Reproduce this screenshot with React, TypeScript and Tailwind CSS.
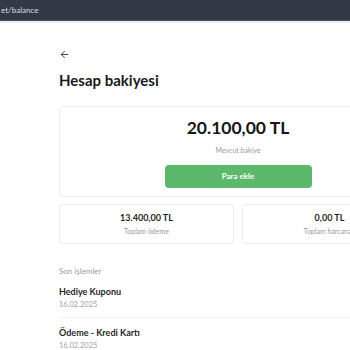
import { ArrowLeft } from "lucide-react";

const font = { fontFamily: "Lato, 'Noto Sans', sans-serif" };

function StatCard({ amount, label }: { amount: string; label: string }) {
  return (
    <div className="flex h-[40px] flex-1 flex-col items-center justify-center rounded-[4px] border border-[#ececec] bg-white">
      <div className="text-[9px] font-bold leading-none text-[#1f1f1f]">{amount}</div>
      <div className="mt-[6px] text-[7px] leading-none text-[#9a9a9a]">{label}</div>
    </div>
  );
}

function TxRow({ title, date }: { title: string; date: string }) {
  return (
    <div className="flex flex-col">
      <div className="text-[9px] font-bold leading-none text-[#1f1f1f]">{title}</div>
      <div className="mt-[5px] text-[7.5px] leading-none text-[#a0a0a0]">{date}</div>
    </div>
  );
}

export default function App() {
  return (
    <div className="h-[350px] w-[350px] overflow-hidden bg-white" style={font}>
      <div className="flex h-[21px] items-center border-b border-[#4a5060] bg-[#333a46]">
        <span className="ml-px text-[8px] leading-none text-[#d9dce2]">et/balance</span>
      </div>
      <div className="h-[2px] bg-[#e9eef5]" />

      <div className="flex flex-col pl-[59px] pt-[26px]" style={{ width: 417 }}>
        <ArrowLeft className="h-[11px] w-[11px] text-[#333]" strokeWidth={2} />
        <h1 className="mt-[13px] text-[15px] font-bold leading-none text-[#1a1a1a]">
          Hesap bakiyesi
        </h1>

        <div className="mt-[18px] flex h-[91px] flex-col items-center rounded-[4px] border border-[#ececec] bg-white pt-[12px]">
          <div className="text-[17.5px] font-bold leading-none text-[#161616]">20.100,00 TL</div>
          <div className="mt-[10px] text-[7px] leading-none text-[#9a9a9a]">Mevcut bakiye</div>
          <button
            type="button"
            className="mt-[11px] flex h-[23px] w-[147px] items-center justify-center rounded-[4px] bg-[#5cb96c] text-[8px] font-bold text-white"
          >
            Para ekle
          </button>
        </div>

        <div className="mt-[7px] flex gap-[8px]">
          <StatCard amount="13.400,00 TL" label="Toplam ödeme" />
          <StatCard amount="0,00 TL" label="Toplam harcanan" />
        </div>

        <div className="mt-[23px] text-[8px] leading-none text-[#9a9a9a]">Son işlemler</div>
        <div className="mt-[12px] flex flex-col">
          <TxRow title="Hediye Kuponu" date="16.02.2025" />
          <div className="mt-[8px] h-px bg-[#f3f3f3]" />
          <div className="pt-[10px]">
            <TxRow title="Ödeme - Kredi Kartı" date="16.02.2025" />
          </div>
        </div>
      </div>
    </div>
  );
}
